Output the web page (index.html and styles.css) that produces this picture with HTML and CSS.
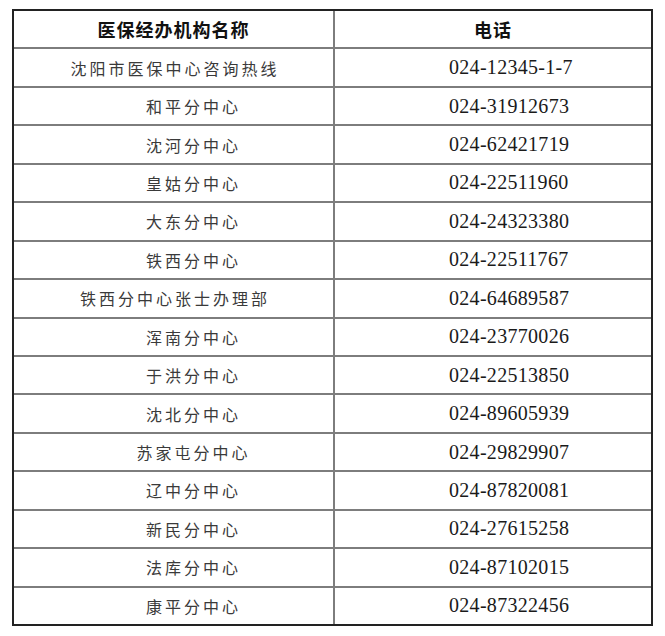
FILE: index.html
```html
<!DOCTYPE html>
<html lang="zh-CN">
<head>
<meta charset="utf-8">
<title>医保经办机构电话</title>
<link rel="stylesheet" href="styles.css">
</head>
<body>
<div class="table">
  <div class="cell head">医保经办机构名称</div>
  <div class="cell head">电话</div>

  <div class="cell name">沈阳市医保中心咨询热线</div>
  <div class="cell tel">024-12345-1-7</div>

  <div class="cell name short">和平分中心</div>
  <div class="cell tel">024-31912673</div>

  <div class="cell name short">沈河分中心</div>
  <div class="cell tel">024-62421719</div>

  <div class="cell name short">皇姑分中心</div>
  <div class="cell tel">024-22511960</div>

  <div class="cell name short">大东分中心</div>
  <div class="cell tel">024-24323380</div>

  <div class="cell name short">铁西分中心</div>
  <div class="cell tel">024-22511767</div>

  <div class="cell name">铁西分中心张士办理部</div>
  <div class="cell tel">024-64689587</div>

  <div class="cell name short">浑南分中心</div>
  <div class="cell tel">024-23770026</div>

  <div class="cell name short">于洪分中心</div>
  <div class="cell tel">024-22513850</div>

  <div class="cell name short">沈北分中心</div>
  <div class="cell tel">024-89605939</div>

  <div class="cell name short">苏家屯分中心</div>
  <div class="cell tel">024-29829907</div>

  <div class="cell name short">辽中分中心</div>
  <div class="cell tel">024-87820081</div>

  <div class="cell name short">新民分中心</div>
  <div class="cell tel">024-27615258</div>

  <div class="cell name short">法库分中心</div>
  <div class="cell tel">024-87102015</div>

  <div class="cell name short">康平分中心</div>
  <div class="cell tel">024-87322456</div>
</div>
</body>
</html>
```
FILE: styles.css
```css
html, body {
  margin: 0;
  padding: 0;
  background: #ffffff;
}

.table {
  display: grid;
  grid-template-columns: 319px 316px;
  grid-template-rows: repeat(16, 1fr);
  gap: 2px;
  width: 637px;
  height: 613px;
  margin: 9px 0 0 12px;
  border: 2px solid #222222;
  background: #7d7d7d;
}

.cell {
  background: #ffffff;
  display: flex;
  align-items: center;
  justify-content: center;
  white-space: nowrap;
}

.head {
  font-family: "Noto Sans CJK SC", "Noto Sans", sans-serif;
  font-weight: 700;
  font-size: 18px;
  letter-spacing: 1px;
  color: #111111;
}

.name {
  font-family: "Noto Sans CJK SC", "Noto Sans", sans-serif;
  font-weight: 400;
  font-size: 16px;
  letter-spacing: 3px;
  color: #3a3a3a;
  padding-left: 3px;
}

.short {
  padding-left: 40px;
}

.tel {
  font-family: "Liberation Serif", "Times New Roman", serif;
  font-size: 20px;
  letter-spacing: 0.3px;
  color: #1a1a1a;
  justify-content: flex-start;
  padding-left: 114px;
}
```
